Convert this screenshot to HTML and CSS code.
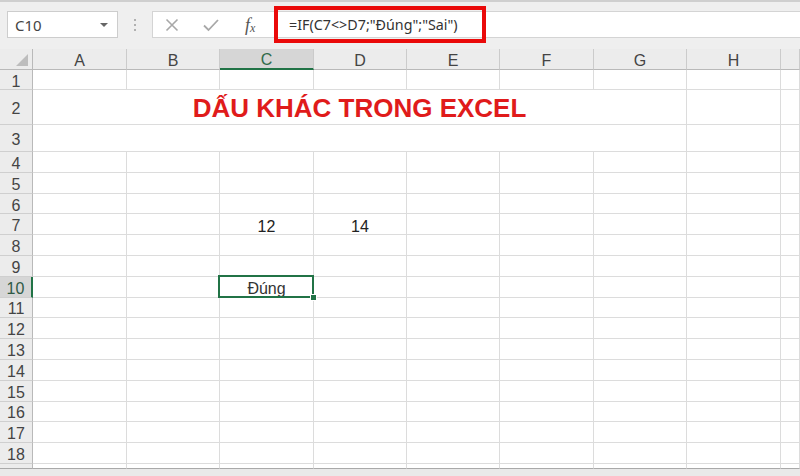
FILE: index.html
```html
<!DOCTYPE html>
<html lang="vi">
<head>
<meta charset="utf-8">
<title>Dấu khác trong Excel</title>
<link rel="stylesheet" href="styles.css">
</head>
<body>
<div class="app">
  <div class="toolbar">
    <div class="namebox">
      <span class="nb-text">C10</span>
      <span class="nb-arrow"></span>
    </div>
    <div class="grip"><i></i><i></i><i></i></div>
    <div class="fbar">
      <div class="fbtns">
        <svg class="ic" width="16" height="16" viewBox="0 0 16 16"><path d="M2.5 2.5 L13.5 13.5 M13.5 2.5 L2.5 13.5" stroke="#a8a8a8" stroke-width="1.6" fill="none"/></svg>
        <svg class="ic" width="18" height="16" viewBox="0 0 18 16"><path d="M2 8.5 L6.5 13 L16 3" stroke="#a8a8a8" stroke-width="1.8" fill="none"/></svg>
        <span class="fx">f<sub>x</sub></span>
      </div>
      <div class="finput">
        <div class="redbox"><span class="ftext">=IF(C7&lt;&gt;D7;"Đúng";"Sai")</span></div>
      </div>
    </div>
  </div>
  <div class="sheet">
    <div class="hd corner"><span class="tri"></span></div>
    <div class="hd col">A</div>
    <div class="hd col">B</div>
    <div class="hd col selcol">C</div>
    <div class="hd col">D</div>
    <div class="hd col">E</div>
    <div class="hd col">F</div>
    <div class="hd col">G</div>
    <div class="hd col">H</div>
    <div class="hd col"></div>

    <div class="hd row">1</div>
    <div class="c"></div><div class="c"></div><div class="c"></div><div class="c"></div><div class="c"></div><div class="c"></div><div class="c"></div><div class="c"></div><div class="c"></div>

    <div class="hd row">2</div>
    <div class="c merged title">DẤU KHÁC TRONG EXCEL</div><div class="c"></div><div class="c"></div>

    <div class="hd row">3</div>
    <div class="c merged"></div><div class="c"></div><div class="c"></div>

    <div class="hd row">4</div>
    <div class="c"></div><div class="c"></div><div class="c"></div><div class="c"></div><div class="c"></div><div class="c"></div><div class="c"></div><div class="c"></div><div class="c"></div>
    <div class="hd row">5</div>
    <div class="c"></div><div class="c"></div><div class="c"></div><div class="c"></div><div class="c"></div><div class="c"></div><div class="c"></div><div class="c"></div><div class="c"></div>
    <div class="hd row">6</div>
    <div class="c"></div><div class="c"></div><div class="c"></div><div class="c"></div><div class="c"></div><div class="c"></div><div class="c"></div><div class="c"></div><div class="c"></div>
    <div class="hd row">7</div>
    <div class="c"></div><div class="c"></div><div class="c val">12</div><div class="c val">14</div><div class="c"></div><div class="c"></div><div class="c"></div><div class="c"></div><div class="c"></div>
    <div class="hd row">8</div>
    <div class="c"></div><div class="c"></div><div class="c"></div><div class="c"></div><div class="c"></div><div class="c"></div><div class="c"></div><div class="c"></div><div class="c"></div>
    <div class="hd row">9</div>
    <div class="c"></div><div class="c"></div><div class="c"></div><div class="c"></div><div class="c"></div><div class="c"></div><div class="c"></div><div class="c"></div><div class="c"></div>
    <div class="hd row selrow">10</div>
    <div class="c"></div><div class="c"></div><div class="c val sel">Đúng</div><div class="c"></div><div class="c"></div><div class="c"></div><div class="c"></div><div class="c"></div><div class="c"></div>
    <div class="hd row">11</div>
    <div class="c"></div><div class="c"></div><div class="c"></div><div class="c"></div><div class="c"></div><div class="c"></div><div class="c"></div><div class="c"></div><div class="c"></div>
    <div class="hd row">12</div>
    <div class="c"></div><div class="c"></div><div class="c"></div><div class="c"></div><div class="c"></div><div class="c"></div><div class="c"></div><div class="c"></div><div class="c"></div>
    <div class="hd row">13</div>
    <div class="c"></div><div class="c"></div><div class="c"></div><div class="c"></div><div class="c"></div><div class="c"></div><div class="c"></div><div class="c"></div><div class="c"></div>
    <div class="hd row">14</div>
    <div class="c"></div><div class="c"></div><div class="c"></div><div class="c"></div><div class="c"></div><div class="c"></div><div class="c"></div><div class="c"></div><div class="c"></div>
    <div class="hd row">15</div>
    <div class="c"></div><div class="c"></div><div class="c"></div><div class="c"></div><div class="c"></div><div class="c"></div><div class="c"></div><div class="c"></div><div class="c"></div>
    <div class="hd row">16</div>
    <div class="c"></div><div class="c"></div><div class="c"></div><div class="c"></div><div class="c"></div><div class="c"></div><div class="c"></div><div class="c"></div><div class="c"></div>
    <div class="hd row">17</div>
    <div class="c"></div><div class="c"></div><div class="c"></div><div class="c"></div><div class="c"></div><div class="c"></div><div class="c"></div><div class="c"></div><div class="c"></div>
    <div class="hd row">18</div>
    <div class="c"></div><div class="c"></div><div class="c"></div><div class="c"></div><div class="c"></div><div class="c"></div><div class="c"></div><div class="c"></div><div class="c"></div>
    <div class="hd row part"></div>
    <div class="c part"></div><div class="c part"></div><div class="c part"></div><div class="c part"></div><div class="c part"></div><div class="c part"></div><div class="c part"></div><div class="c part"></div><div class="c part"></div>
  </div>
  <div class="bottom"></div>
</div>
</body>
</html>
```
FILE: styles.css
```css
html, body {
  margin: 0;
  padding: 0;
}
body {
  width: 800px;
  height: 476px;
  overflow: hidden;
  background: #e9e9e9;
  font-family: "Liberation Sans", Arial, sans-serif;
}
.app {
  display: flex;
  flex-direction: column;
  width: 800px;
  height: 476px;
}
.toolbar {
  height: 49px;
  box-sizing: border-box;
  border-top: 2px solid #cfcfcf;
  background: #efefef;
  display: flex;
  align-items: flex-start;
  padding-top: 9px;
  padding-left: 7px;
}
.namebox {
  width: 111px;
  height: 27px;
  box-sizing: border-box;
  background: #fff;
  border: 1px solid #cdcdcd;
  display: flex;
  align-items: center;
  justify-content: space-between;
  padding: 0 9px 0 7px;
}
.nb-text {
  font-family: "Noto Sans", "Open Sans", sans-serif;
  font-size: 15px;
  color: #444;
}
.nb-arrow {
  width: 0;
  height: 0;
  border-left: 4px solid transparent;
  border-right: 4px solid transparent;
  border-top: 4px solid #666;
}
.grip {
  width: 34px;
  height: 27px;
  display: flex;
  flex-direction: column;
  align-items: center;
  justify-content: center;
  gap: 3px;
}
.grip i {
  display: block;
  width: 2px;
  height: 2px;
  background: #b0b0b0;
}
.fbar {
  flex: 1;
  height: 27px;
  display: flex;
  background: #fff;
  border: 1px solid #d4d4d4;
  border-right: none;
  box-sizing: border-box;
}
.fbtns {
  width: 117px;
  display: flex;
  align-items: center;
  padding-left: 11px;
  gap: 22px;
  box-sizing: border-box;
}
.ic {
  display: block;
}
.fx {
  font-family: "Liberation Serif", serif;
  font-style: italic;
  font-size: 18px;
  color: #555;
  margin-left: 3px;
  line-height: 1;
}
.fx sub {
  font-size: 12px;
  vertical-align: -1px;
}
.finput {
  flex: 1;
  position: relative;
}
.redbox {
  position: absolute;
  left: 4px;
  top: -6px;
  width: 212px;
  height: 37px;
  box-sizing: border-box;
  border: 4px solid #ea0a0a;
  display: flex;
  align-items: center;
  padding-left: 11px;
}
.ftext {
  font-family: "Noto Sans", "Open Sans", sans-serif;
  font-size: 14.3px;
  color: #333;
  white-space: nowrap;
}
.sheet {
  display: grid;
  grid-template-columns: 33px 94px 93px 94px 93px 93px 94px 93px 94px 1fr;
  grid-template-rows: 21px 20px 35px 27px repeat(15, 20.8px) 5px;
  background: #fff;
}
.hd {
  background: #ececec;
  color: #444;
  font-size: 16px;
  display: flex;
  align-items: center;
  justify-content: center;
  box-sizing: border-box;
}
.col {
  border-right: 1px solid #cbcbcb;
  border-bottom: 1px solid #b9b9b9;
  padding-top: 3px;
}
.corner {
  border-right: 1px solid #b9b9b9;
  border-bottom: 1px solid #b9b9b9;
  position: relative;
}
.tri {
  position: absolute;
  right: 4px;
  bottom: 3px;
  width: 0;
  height: 0;
  border-left: 12px solid transparent;
  border-bottom: 12px solid #bdbdbd;
}
.row {
  border-right: 1px solid #b9b9b9;
  border-bottom: 1px solid #cfcfcf;
  font-size: 16px;
  line-height: 1;
  padding-top: 4px;
}
.selcol {
  background: #d6d6d6;
  color: #2f6a4a;
  border-bottom: 2px solid #217346;
}
.selrow {
  background: #d6d6d6;
  color: #2f5a45;
  border-right: 2px solid #217346;
}
.c {
  border-right: 1px solid #dcdcdc;
  border-bottom: 1px solid #dcdcdc;
  box-sizing: border-box;
  background: #fff;
}
.part {
  border-bottom: 1px solid #a9a9a9;
  padding-top: 0;
}
.merged {
  grid-column: span 7;
  display: flex;
  align-items: center;
  justify-content: center;
}
.title {
  font-weight: bold;
  font-size: 26px;
  color: #e01b1b;
  white-space: nowrap;
  padding-top: 2px;
}
.val {
  display: flex;
  align-items: center;
  justify-content: center;
  font-size: 16px;
  color: #222;
  padding-top: 5px;
}
.sel {
  position: relative;
  color: #333;
}
.sel::after {
  content: "";
  position: absolute;
  left: -2px;
  top: -2px;
  right: -1px;
  bottom: -1px;
  border: 2px solid #217346;
}
.sel::before {
  content: "";
  position: absolute;
  right: -4px;
  bottom: -4px;
  width: 5px;
  height: 5px;
  background: #217346;
  border: 1px solid #fff;
  z-index: 2;
}
.bottom {
  flex: 1;
  background: #e9e9e9;
}
```
